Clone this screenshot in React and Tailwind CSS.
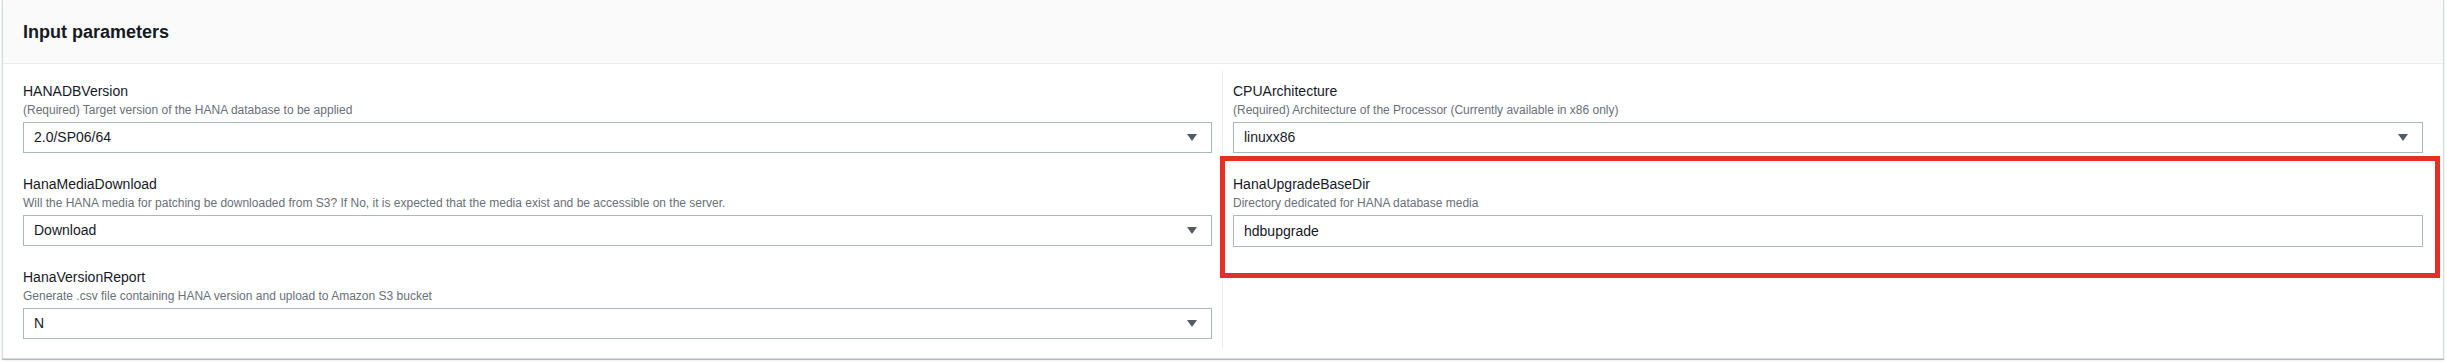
import React from "react";

const font = { fontFamily: '"Liberation Sans", Arial, sans-serif' };

function Arrow() {
  return (
    <svg width="10" height="7" viewBox="0 0 10 7" className="shrink-0">
      <polygon points="0,0 10,0 5,7" fill="#545b64" />
    </svg>
  );
}

function Field({ label, desc, value, select = true, tall = false }) {
  return (
    <div className="flex flex-col">
      <div className="text-[14px] leading-[20px] text-[#16191f]">{label}</div>
      <div className="text-[12px] leading-[18px] text-[#687078] whitespace-nowrap">{desc}</div>
      <div
        className={`mt-[3px] flex items-center justify-between border border-[#aab7b8] bg-white pl-[10px] pr-[14px] ${
          tall ? "h-[32px]" : "h-[31px]"
        }`}
      >
        <span className="text-[14px] text-[#16191f]">{value}</span>
        {select && <Arrow />}
      </div>
    </div>
  );
}

export default function App() {
  return (
    <div className="w-[2447px] h-[362px] bg-white" style={font}>
      <div className="ml-[2px] w-[2442px] h-[359px] border-l border-r border-b border-[#d5dbdb] bg-white shadow-[0_1px_1px_0_rgba(0,28,36,0.3)] flex flex-col">
        <div className="h-[64px] shrink-0 bg-[#fafafa] border-b border-[#eaeded] flex items-center px-[20px]">
          <h2 className="text-[18px] leading-[24px] font-bold text-[#16191f]">Input parameters</h2>
        </div>
        <div className="relative flex-1 px-[20px] pt-[7px] pb-[10px]">
          <div className="grid grid-cols-2 h-full">
            <div className="pr-[10px] border-r border-[#eaeded] pt-[10px] flex flex-col gap-[21px]">
              <Field
                label="HANADBVersion"
                desc="(Required) Target version of the HANA database to be applied"
                value="2.0/SP06/64"
              />
              <Field
                label="HanaMediaDownload"
                desc="Will the HANA media for patching be downloaded from S3? If No, it is expected that the media exist and be accessible on the server."
                value="Download"
              />
              <Field
                label="HanaVersionReport"
                desc="Generate .csv file containing HANA version and upload to Amazon S3 bucket"
                value="N"
              />
            </div>
            <div className="pl-[10px] pt-[10px] flex flex-col gap-[21px]">
              <Field
                label="CPUArchitecture"
                desc="(Required) Architecture of the Processor (Currently available in x86 only)"
                value="linuxx86"
              />
              <Field
                label="HanaUpgradeBaseDir"
                desc="Directory dedicated for HANA database media"
                value="hdbupgrade"
                select={false}
                tall
              />
            </div>
          </div>
          <div className="absolute left-[1217px] top-[92px] w-[1220px] h-[122px] border-[5px] border-[#e62e27] pointer-events-none" />
        </div>
      </div>
    </div>
  );
}
